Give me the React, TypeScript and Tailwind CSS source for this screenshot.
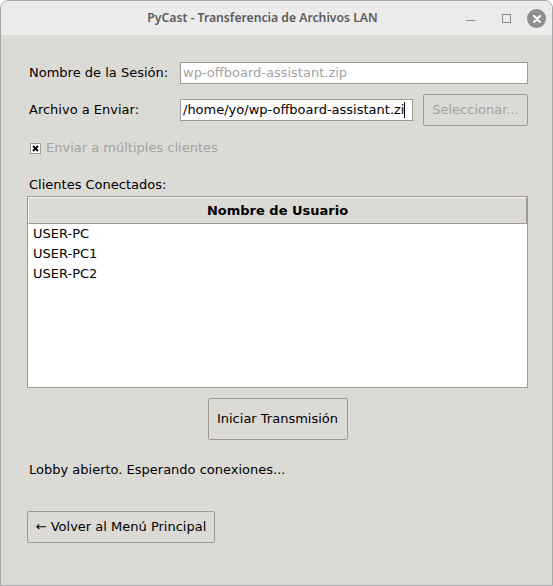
import React from 'react';

const users: string[] = ['USER-PC', 'USER-PC1', 'USER-PC2'];

const TitleBar: React.FC = () => (
  <div className="relative flex h-[34px] shrink-0 items-center justify-center rounded-t-[8px] bg-[#ebebeb] pr-[28px]">
    <span className="font-['Noto_Sans',sans-serif] text-[12.2px] font-semibold text-[#5c5c5c]">
      PyCast - Transferencia de Archivos LAN
    </span>
    <div className="absolute right-[6px] top-[8px] flex items-center">
      <span className="mt-[3px] block h-[1px] w-[9px] bg-[#8a8a8a]" />
      <span className="ml-[27px] block h-[9px] w-[9px] border border-[#8a8a8a]" />
      <span className="ml-[16px] flex h-[19px] w-[19px] items-center justify-center rounded-full bg-[#8e8e8e]">
        <svg width="8" height="8" viewBox="0 0 8 8">
          <path d="M1 1L7 7M7 1L1 7" stroke="#fff" strokeWidth="2" strokeLinecap="round" />
        </svg>
      </span>
    </div>
  </div>
);

export default function App() {
  return (
    <div className="h-[586px] w-[553px] bg-white font-['DejaVu_Sans',sans-serif] text-[13px] text-black">
      <div className="flex h-full w-full flex-col overflow-hidden rounded-t-[8px] border border-[#a7a7a7]">
        <TitleBar />
        <div className="flex flex-1 flex-col bg-[#dcdad5] pl-[26px] pr-[24px]">
          <div className="mt-[27px] flex h-[22px] items-center">
            <span className="w-[153px] pl-[2px]">Nombre de la Sesión:</span>
            <div className="flex h-[22px] flex-1 items-center border border-[#9e9a91] bg-white px-[2px] text-[#a3a3a3]">
              wp-offboard-assistant.zip
            </div>
          </div>

          <div className="mt-[10px] flex h-[32px] items-center">
            <span className="w-[153px] pl-[2px]">Archivo a Enviar:</span>
            <div className="flex h-[22px] w-[233px] items-center overflow-hidden whitespace-nowrap border border-[#9e9a91] bg-white pl-[2px]">
              <span className="shrink-0">/home/yo/wp-offboard-assistant.zi</span>
              <span className="h-[16px] w-[1px] shrink-0 bg-black" />
            </div>
            <button className="ml-[10px] h-[32px] flex-1 rounded-[2px] border border-[#9e9a91] bg-[#dcdad5] text-[#a3a3a3]">
              Seleccionar...
            </button>
          </div>

          <div className="mt-[13px] flex h-[18px] items-center gap-[5px] pl-[3px] text-[#a3a3a3]">
            <span className="flex h-[11px] w-[11px] items-center justify-center border border-[#9e9a91] bg-white">
              <svg width="7" height="7" viewBox="0 0 7 7">
                <path d="M1 1L6 6M6 1L1 6" stroke="#000" strokeWidth="1.8" />
              </svg>
            </span>
            Enviar a múltiples clientes
          </div>

          <div className="mt-[19px] flex h-[18px] items-center pl-[2px]">Clientes Conectados:</div>

          <div className="mt-[2px] h-[192px] border border-[#9e9a91] bg-white">
            <div className="flex h-[27px] items-center justify-center border border-[#9e9a91] border-t-[#f5f4f2] border-l-[#f5f4f2] bg-[#dcdad5] font-bold">
              Nombre de Usuario
            </div>
            {users.map((user) => (
              <div key={user} className="flex h-[20px] items-center px-[5px]">
                {user}
              </div>
            ))}
          </div>

          <div className="mt-[10px] flex justify-center">
            <button className="h-[42px] w-[140px] rounded-[2px] border border-[#9e9a91] bg-[#dcdad5]">
              Iniciar Transmisión
            </button>
          </div>

          <div className="mt-[21px] flex h-[18px] items-center pl-[2px]">
            Lobby abierto. Esperando conexiones...
          </div>

          <div className="mt-[32px]">
            <button className="h-[32px] w-[188px] rounded-[2px] border border-[#9e9a91] bg-[#dcdad5]">
              ← Volver al Menú Principal
            </button>
          </div>
        </div>
      </div>
    </div>
  );
}
